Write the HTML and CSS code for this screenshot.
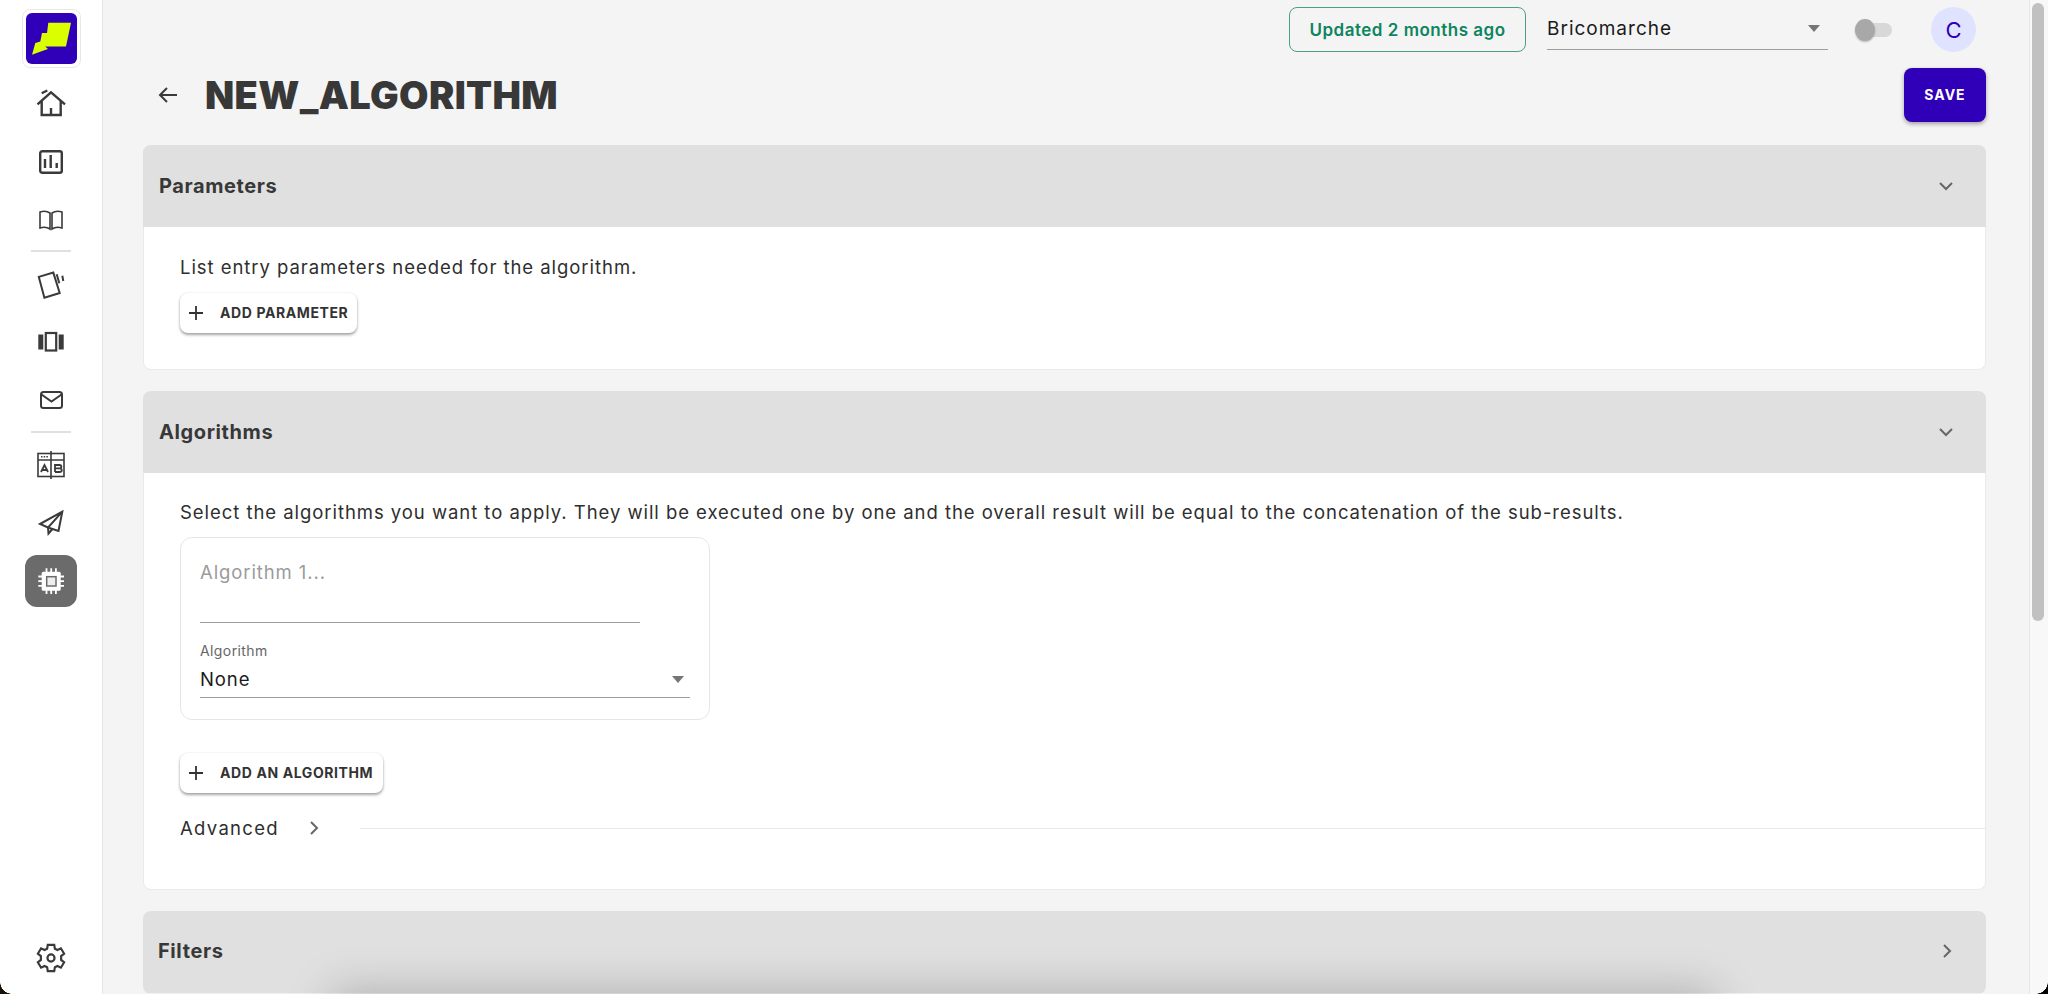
FILE: index.html
```html
<!DOCTYPE html>
<html lang="en">
<head>
<meta charset="utf-8">
<title>NEW_ALGORITHM</title>
<link rel="stylesheet" href="styles.css">
</head>
<body>
<div class="app">
  <nav class="sidebar">
    <div class="logo">
      <svg viewBox="0 0 51 51" width="51" height="51"><rect width="51" height="51" rx="6" fill="#3000b8"/><path d="M22.300 9.700H45L40 33.400H19.300L22 36 17.600 37.400 6 41.700 9.300 30 14.300 28.400 16 20H21Z" fill="#d9ff00"/></svg>
    </div>
    <a class="nav-item nav-first"><svg viewBox="0 0 28 28" class="ico ico-h"><path d="M.5 14.300 14 2.300 28 14.300M4.700 10.500V25H23.700V10.500M14 18V25M4.700 3.300 10.300 .5"/></svg></a>
    <a class="nav-item"><svg viewBox="0 0 28 28" class="ico ico-h"><rect x="3.200" y="3.200" width="21.600" height="21.600" rx="2"/><path d="M8 11V20M13.700 7V20M19.700 15V20"/></svg></a>
    <a class="nav-item"><svg viewBox="0 0 28 28" class="ico ico-t"><path d="M13 8C10 6 6 6 3 7V23C6 22 10 22 13 24ZM15 8C18 6 22 6 25 7V23C22 22 18 22 15 24Z"/></svg></a>
    <div class="nav-sep"></div>
    <a class="nav-item"><svg viewBox="0 0 28 28" class="ico"><path d="M1.800 5.900 16.300 1.600 22.700 22 7.400 26.800ZM19.700 3.300 22.300 12.300M25.300 4.700 26.300 10"/></svg></a>
    <a class="nav-item"><svg viewBox="0 0 28 28" class="ico ico-c"><rect x="8.800" y="5" width="10.400" height="17.500"/><path class="solid" d="M1.300 6.500H6.300V21.500H1.300ZM21.700 6.500H26.700V21.500H21.700Z"/></svg></a>
    <a class="nav-item"><svg viewBox="0 0 28 28" class="ico"><rect x="4" y="6" width="21" height="16" rx="2.500"/><path d="M4.500 8.500 14.500 15.500 24.500 8.500"/></svg></a>
    <div class="nav-sep"></div>
    <a class="nav-item"><svg viewBox="0 0 28 28" class="ico ico-t"><rect x="1" y="2.500" width="26" height="23"/><path d="M1 9H27M14 0V28"/><path class="dots" d="M4 5.700H11"/><path class="letter" d="M4 21 7.500 14 11 21M5 19H10M18 21V14H22.500C25 14 25 17.400 22.500 17.400H18M22.500 17.400C25.500 17.400 25.500 21 22.500 21H18"/></svg></a>
    <a class="nav-item"><svg viewBox="0 0 28 28" class="ico"><path d="M25.300 2.700 3 15 11 18.500 21.500 22ZM25.300 2.700 11 18.500 11.500 24.500 15.500 20"/></svg></a>
    <a class="nav-item nav-active"><svg viewBox="0 0 28 28" class="ico ico-chip"><path class="pins" d="M9.500 1.300V27M14.200 1.300V27M18.900 1.300V27M1.300 9.500H27M1.300 14.200H27M1.300 18.900H27"/><rect class="chip-body" x="4.700" y="4.700" width="19" height="19" rx="1.500"/><rect class="chip-core" x="9.700" y="9.700" width="9.300" height="9.300"/></svg></a>
    <a class="nav-item nav-bottom"><svg viewBox="1 1 26 26" class="ico"><path d="M11 1.800H17L17.600 5.400 20 6.600 23.200 5 26.200 10 23.400 12.200V15.800L26.200 18 23.200 23 20 21.400 17.600 22.600 17 26.200H11L10.400 22.600 8 21.400 4.800 23 1.800 18 4.600 15.800V12.200L1.800 10 4.800 5 8 6.600 10.400 5.400Z"/><circle cx="14" cy="14" r="3.300"/></svg></a>
  </nav>

  <div class="main">
    <header class="topbar">
      <div class="badge">Updated 2 months ago</div>
      <div class="select select-org"><span>Bricomarche</span><i class="caret"></i></div>
      <div class="toggle"><i></i></div>
      <div class="avatar">C</div>
    </header>

    <div class="title-row">
      <svg class="back" viewBox="0 0 24 24"><path d="M21 12H4M11 5 4 12 11 19"/></svg>
      <h1>NEW_ALGORITHM</h1>
      <button class="save">SAVE</button>
    </div>

    <section class="card">
      <div class="card-head"><h2>Parameters</h2><svg class="chev" viewBox="0 0 16 16"><path d="M2 5 8 11 14 5"/></svg></div>
      <div class="card-body body-params">
        <p>List entry parameters needed for the algorithm.</p>
        <button class="add add-param"><svg viewBox="0 0 16 16"><path d="M8 1V15M1 8H15"/></svg>ADD PARAMETER</button>
      </div>
    </section>

    <section class="card">
      <div class="card-head"><h2>Algorithms</h2><svg class="chev" viewBox="0 0 16 16"><path d="M2 5 8 11 14 5"/></svg></div>
      <div class="card-body body-algos">
        <p>Select the algorithms you want to apply. They will be executed one by one and the overall result will be equal to the concatenation of the sub-results.</p>
        <div class="algo-box">
          <div class="algo-input">Algorithm 1...</div>
          <div class="algo-label">Algorithm</div>
          <div class="select algo-select"><span>None</span><i class="caret"></i></div>
        </div>
        <button class="add add-algo"><svg viewBox="0 0 16 16"><path d="M8 1V15M1 8H15"/></svg>ADD AN ALGORITHM</button>
        <div class="advanced"><span>Advanced</span><svg class="chev chev-r" viewBox="0 0 16 16"><path d="M5 2 11 8 5 14"/></svg><hr></div>
      </div>
    </section>

    <section class="card card-last">
      <div class="card-head"><h2>Filters</h2><svg class="chev chev-r" viewBox="0 0 16 16"><path d="M5 2 11 8 5 14"/></svg></div>
      <div class="fade"></div>
    </section>
  </div>

  <aside class="scrollbar"><div class="thumb"></div></aside>
</div>
<div class="corner corner-l"></div>
<div class="corner corner-r"></div>
</body>
</html>
```
FILE: styles.css
```css
* { box-sizing: border-box; }
html, body { margin: 0; height: 994px; overflow: hidden; }
body { font-family: Inter, "Liberation Sans", sans-serif; color: #333; background: #f4f4f4; position: relative; }
.app { display: flex; height: 994px; overflow: hidden; }

.sidebar { width: 103px; flex: none; background: #fff; border-right: 1px solid #e6e6e6; display: flex; flex-direction: column; align-items: center; padding-top: 9px; }
.logo { width: 59px; height: 59px; border: 1px solid #e8e8e8; border-radius: 8px; display: flex; align-items: center; justify-content: center; margin-bottom: 3px; }
.nav-item { width: 52px; height: 52px; display: flex; align-items: center; justify-content: center; border-radius: 12px; margin-bottom: 5.700px; flex: none; }
.nav-first { margin-top: 7px; }
.nav-sep { width: 40px; height: 2px; background: #e0e0e0; margin: -1px 0 6.500px; flex: none; }
.nav-active { background: #6b6b6b; }
.nav-bottom { margin-top: auto; margin-bottom: 10px; }
.ico { width: 28px; height: 28px; fill: none; stroke: #3a3a3a; stroke-width: 2; overflow: visible; }
.ico-h { stroke-width: 2.400; }
.ico-c { stroke-width: 2.200; }
.ico-t { stroke-width: 1.600; }
.solid { fill: #3a3a3a; stroke: none; }
.dots { stroke-dasharray: 1.500 1.200; }
.letter { stroke-width: 1.800; }
.pins { stroke: #fff; stroke-width: 1.800; }
.chip-body { fill: #fff; stroke: none; }
.chip-core { fill: #eee; stroke: #6b6b6b; stroke-width: 1.500; }

.main { flex: 1; min-width: 0; padding: 7px 43px 0 40px; }
.topbar { display: flex; align-items: flex-start; height: 45px; }
.badge { margin-left: auto; width: 237px; height: 45px; border: 1px solid #4e9e85; border-radius: 8px; color: #0c8560; font-weight: 600; font-size: 17px; letter-spacing: .5px; display: flex; align-items: center; justify-content: center; }
.select { display: flex; align-items: center; justify-content: space-between; border-bottom: 1px solid #9e9e9e; color: #1a1a1a; font-size: 18.500px; letter-spacing: .9px; }
.select-org { width: 281px; height: 43px; margin-left: 21px; padding-right: 8px; font-size: 19px; letter-spacing: 1px; }
.caret { width: 0; height: 0; border: 6px solid transparent; border-top: 7px solid #757575; border-bottom: 0; }
.toggle { width: 37px; height: 14px; background: #d8d8d8; border-radius: 7px; margin: 16px 0 0 27px; position: relative; }
.toggle i { position: absolute; left: 0; top: -4px; width: 20px; height: 22px; border-radius: 50%; background: #a8a8a8; box-shadow: 0 1px 2px rgba(0,0,0,.25); }
.avatar { width: 45px; height: 45px; border-radius: 50%; background: #e0e3ff; color: #3000b8; font-size: 22px; display: flex; align-items: center; justify-content: center; margin: 0 10px 0 39px; }

.title-row { display: flex; align-items: center; height: 94px; margin-top: -1px; padding-bottom: 7px; }
.back { width: 24px; height: 24px; fill: none; stroke: #3a3a3a; stroke-width: 2; margin-left: 13px; }
h1 { margin: 0 0 0 25px; font-size: 38px; font-weight: 900; letter-spacing: .35px; color: #383838; }
.save { margin-left: auto; width: 82px; height: 54px; border: 0; border-radius: 8px; background: #3000b8; color: #fff; font: 700 14px Inter, sans-serif; letter-spacing: 1px; box-shadow: 0 2px 4px rgba(0,0,0,.35); }

.card { background: #fff; border-radius: 8px; border: 1px solid #eaeaea; border-top: 0; margin-bottom: 21px; }
.card-head { height: 82px; background: #e0e0e0; border-radius: 8px 8px 0 0; display: flex; align-items: center; justify-content: space-between; padding: 0 32px 0 16px; margin: 0 -1px; }
h2 { margin: 0; font-size: 20px; font-weight: 700; letter-spacing: .6px; color: #383838; }
.chev { width: 16px; height: 16px; fill: none; stroke: #666; stroke-width: 2; }
.card-body p { margin: 0; font-size: 18.500px; letter-spacing: .95px; color: #2e2e2e; line-height: 28px; }
.body-params { height: 142px; padding: 26px 36px 0; }
.body-algos { height: 416px; padding: 25px 36px 0; }
.add { display: flex; align-items: center; height: 40px; border: 0; background: #fff; border-radius: 8px; padding: 0 8px 1px; font: 700 14px Inter, sans-serif; letter-spacing: .6px; color: #333; box-shadow: 0 2px 3px rgba(0,0,0,.35), 0 0 2px rgba(0,0,0,.1); }
.add svg { width: 16px; height: 16px; fill: none; stroke: #333; stroke-width: 1.800; margin-right: 16px; }
.add-param { width: 177px; margin-top: 12px; }
.add-algo { width: 203px; margin-top: 33px; }
.algo-box { width: 530px; height: 183px; margin-top: 11px; border: 1px solid #e6e6e6; border-radius: 12px; padding: 0 19px; }
.algo-input { width: 440px; height: 85px; padding-top: 23px; border-bottom: 1px solid #9e9e9e; color: #9b9b9b; font-size: 18.500px; letter-spacing: .9px; }
.algo-label { font-size: 14px; letter-spacing: .4px; color: #666; margin-top: 19px; }
.algo-select { height: 37px; margin-top: 2px; padding-right: 6px; }
.advanced { display: flex; align-items: center; height: 30px; margin-top: 20px; font-size: 18.500px; letter-spacing: 1.300px; color: #2e2e2e; margin-right: -36px; }
.advanced .chev { margin-left: 27px; }
.advanced hr { flex: 1; margin: 0 0 0 38px; border: 0; border-top: 1px solid #e8e8e8; }
.card-last { position: relative; overflow: hidden; height: 83px; border: 0; background: #f0f0f0; }
.card-last .card-head { padding-bottom: 2px; }
.fade { position: absolute; left: 200px; width: 1360px; top: 92px; height: 60px; box-shadow: 0 0 45px 12px rgba(0,0,0,.22); }

.scrollbar { width: 19px; flex: none; background: #f8f8f8; border-left: 1px solid #e6e6e6; padding: 3px 4px 0 2px; }
.thumb { height: 618px; border-radius: 6px; background: #c1c1c1; }
.corner { position: absolute; bottom: 0; width: 12px; height: 12px; }
.corner-l { left: 0; background: radial-gradient(circle at 100% 0, transparent 11.500px, #1a1208 12px); }
.corner-r { right: 0; background: radial-gradient(circle at 0 0, transparent 11.500px, #000 12px); }
```
